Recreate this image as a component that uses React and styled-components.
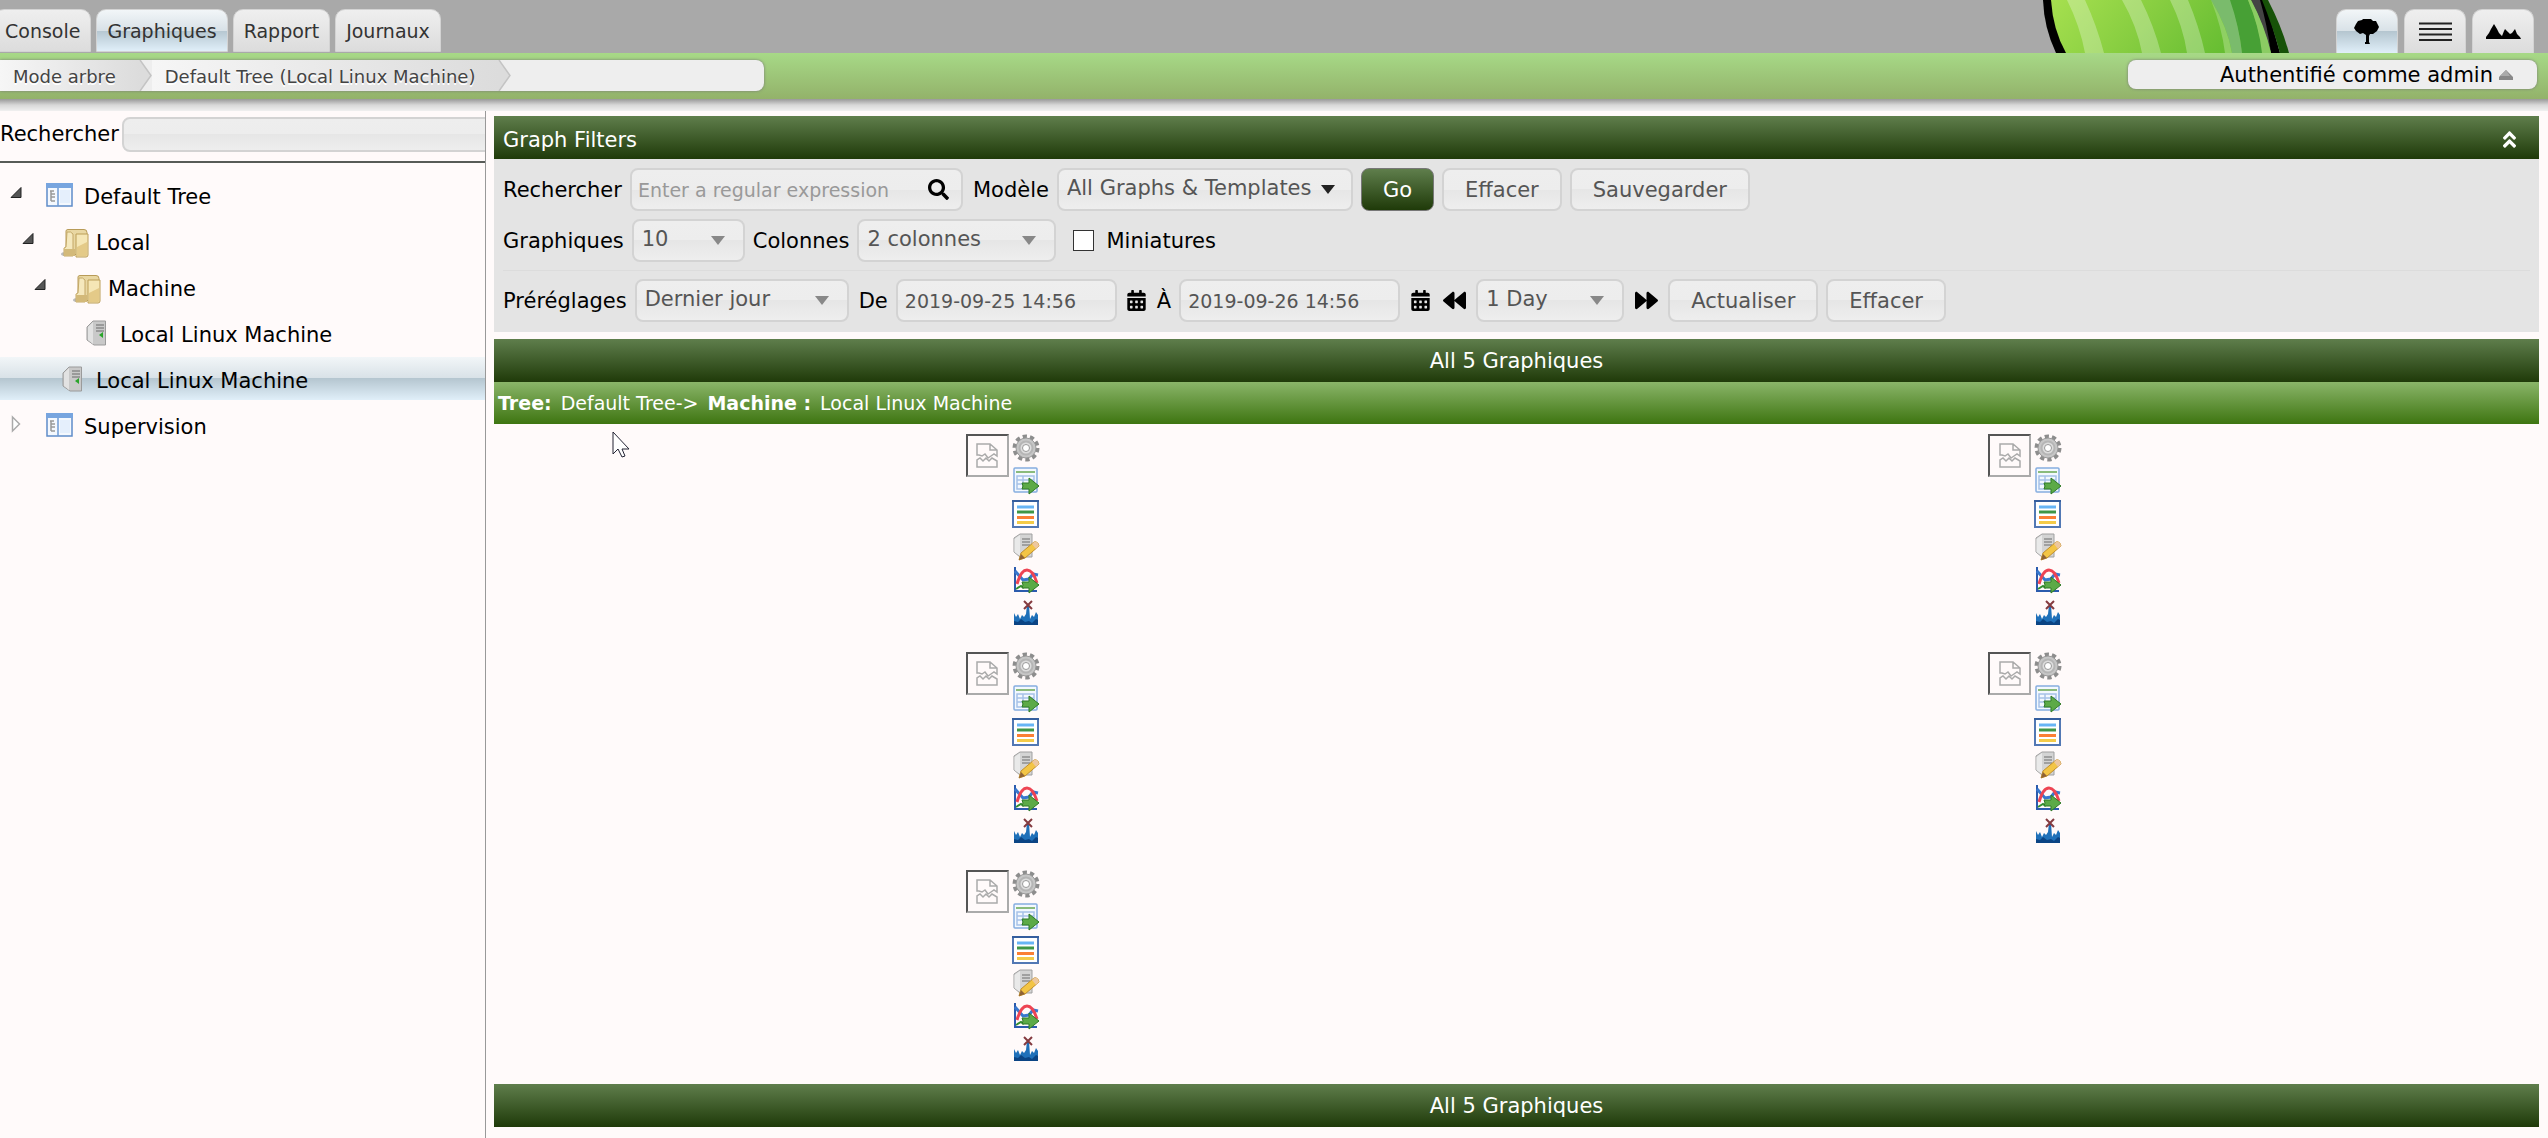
import { FaSearch, FaCalendarAlt, FaBackward, FaForward, FaAngleDoubleUp } from "react-icons/fa";
import styled, { createGlobalStyle, css } from "styled-components";

const GlobalStyle = createGlobalStyle`
  * {
    box-sizing: border-box;
  }
  body {
    margin: 0;
    background: #fffafa;
    color: #000;
    font-family: "DejaVu Sans", Verdana, sans-serif;
    font-size: 21px;
    line-height: 24px;
  }
  a {
    color: inherit;
    text-decoration: none;
  }
  button, input, select {
    font-family: inherit;
    font-size: 21px;
    color: #555;
  }
`;

const tabs = ["Console", "Graphiques", "Rapport", "Journaux"];

const treeItems = [
  { label: "Default Tree", level: 0, icon: "tree", state: "open" },
  { label: "Local", level: 1, icon: "folder", state: "open" },
  { label: "Machine", level: 2, icon: "folder", state: "open" },
  { label: "Local Linux Machine", level: 3, icon: "server" },
  { label: "Local Linux Machine", level: 1, icon: "server", selected: true },
  { label: "Supervision", level: 0, icon: "tree", state: "closed" },
];

const graphs = [1, 2, 3, 4, 5];

const Logo = () => (
  <LogoSvg viewBox="0 0 280 53" aria-hidden="true">
    <defs>
      <linearGradient id="logoFill" x1="0" x2="1" y1="0" y2="0.2">
        <stop offset="0" stopColor="#a6e04f" />
        <stop offset="0.5" stopColor="#86cd40" />
        <stop offset="1" stopColor="#62bb30" />
      </linearGradient>
    </defs>
    <path d="M14 0H236L251 53H27Q15 28 14 0Z" fill="#000" />
    <path d="M233 0H239Q253 27 260 53H251Q244 27 233 0Z" fill="#175208" />
    <path d="M222 0H231Q238 24 242 53H238Q232 24 222 0Z" fill="#444" />
    <path d="M22 0H222Q234 24 242 53H37Q24 30 22 0Z" fill="url(#logoFill)" />
    <path d="M200 0H219Q230 26 234 53H213Q210 26 200 0Z" fill="#47a035" />
    <path d="M182 0H201Q210 26 213 53H203Q199 28 182 0Z" fill="#7abb6c" />
    <path d="M182 0Q199 28 203 53H196Q193 28 182 0Z" fill="#8fd063" />
    <path d="M222 0Q236 26 242 53H233Q230 26 219 0Z" fill="#8bcc63" />
    <g fill="#fff" opacity="0.28">
      <path d="M38 0H56Q68 26 75 53H56Q51 26 38 0Z" />
      <path d="M93 0H112Q125 26 132 53H113Q108 26 93 0Z" />
      <path d="M141 0H159Q170 26 176 53H158Q154 26 141 0Z" />
    </g>
  </LogoSvg>
);

const TreeViewIcon = () => (
  <svg width="26" height="28" viewBox="0 0 26 28">
    <path d="M9 1h8l2 2h3l2 4 1 2-2 4-4 3h-3l-1 2v6l1 2h-5v-2h1v-7l-3-2-3 1-4-3-2-3 2-4 2-3 4-1z" />
  </svg>
);

const ListViewIcon = () => (
  <svg width="33" height="20" viewBox="0 0 33 20">
    <path d="M0 1.500h33M0 7h33M0 12.500h33M0 18h33" stroke="#222" strokeWidth="2" />
  </svg>
);

const PreviewIcon = () => (
  <svg width="35" height="15" viewBox="0 0 35 15">
    <path d="M0 15v-2l3-4 2-4 3-5 3 5 2 4 3 3 2-5 1-2 3 3 2 2 2-1 3-4 2 5 3 3 1 2z" />
  </svg>
);

const Expander = ({ open }) => (
  <svg width="12" height="18" viewBox="0 0 12 18">
    {open ? (
      <path d="M11 2.500V12.500H1Z" fill="#555" stroke="#222" />
    ) : (
      <path d="M2.500 2V16L9.500 9Z" fill="#fff" stroke="#aaa" strokeWidth="1.500" />
    )}
  </svg>
);

const TreeIcon = () => (
  <svg width="27" height="24" viewBox="0 0 27 24">
    <rect x="1" y="1" width="25" height="22" fill="#f4f8fe" stroke="#5f8cc9" strokeWidth="1.500" />
    <path d="M0 0h27v5H0z" fill="#78a5df" />
    <path d="M12 5v18" stroke="#6f9bd4" strokeWidth="1.500" />
    <rect x="14" y="7" width="10" height="13" fill="#e5effc" />
    <path d="M4 8h4M5 8v10M5 11h4M5 14h4M5 18h4" stroke="#999" strokeWidth="1.500" fill="none" />
  </svg>
);

const FolderIcon = () => (
  <svg width="28" height="29" viewBox="0 0 28 29">
    <ellipse cx="5" cy="25" rx="5" ry="2" fill="#bbb" />
    <path d="M5 2q0-1.500 2-1.500h16q3 0 3 3v22H5z" fill="#e9d7a2" stroke="#b89b58" />
    <path d="M6 3q4-1 6 2v22H3V19l2-1z" fill="#f5e8bd" stroke="#c4a867" />
    <path d="M3 20h11v7H3z" fill="#d3b979" />
    <path d="M15 5h12v21q0 2-2 2H15z" fill="#f5e6b5" stroke="#bc9e58" />
    <path d="M16 18l10-5v13q0 1-1 1h-9z" fill="#e4ca88" />
  </svg>
);

const ServerIcon = () => (
  <svg width="21" height="26" viewBox="0 0 21 26">
    <path d="M1 7l6-6h12.500v24H8l-7-5z" fill="#c9c9c9" stroke="#9b9b9b" />
    <path d="M2 7l5-5v22l-5-4z" fill="#e2e2e2" />
    <path d="M10 5h8M10 8h8M10 11h8" stroke="#8a8a8a" strokeWidth="1.500" />
    <path d="M13 15l4-3v6z" fill="#2ba52b" />
  </svg>
);

const treeIcons = { tree: TreeIcon, folder: FolderIcon, server: ServerIcon };

const BrokenImage = () => (
  <BrokenFrame role="img" aria-label="Graphique">
    <svg width="22" height="25" viewBox="0 0 22 25" fill="none" stroke="#aaa" strokeWidth="1.500">
      <path d="M1 12V1h13l7 6v6l-3-2-3 2-3 2-3-4-3 2-3-1zM14 1v6h7" />
      <path d="M1 24v-7l3-2 3 3 3-3 3 3 3-3 5 3v6z" />
    </svg>
  </BrokenFrame>
);

const GearIcon = () => (
  <svg width="28" height="28" viewBox="0 0 28 28">
    <circle cx="14" cy="14" r="11.500" fill="none" stroke="#8d8d8d" strokeWidth="4" strokeDasharray="4.200 3.025" />
    <circle cx="14" cy="14" r="10" fill="#c6c6c6" stroke="#999" />
    <circle cx="14" cy="14" r="6.500" fill="#ddd" stroke="#b5b5b5" strokeWidth="2" />
    <circle cx="14" cy="14" r="3.500" fill="#fff" stroke="#999" />
  </svg>
);

const GreenArrow = () => (
  <path d="M10 16h7v-5l10 8-10 8v-5h-7l1-3z" fill="#5caa47" stroke="#2f7a26" />
);

const CsvIcon = () => (
  <svg width="28" height="28" viewBox="0 0 28 28">
    <rect x="2" y="1" width="23" height="24" rx="1" fill="#f3f8fe" stroke="#86ade0" strokeWidth="1.500" />
    <path d="M4 5h19" stroke="#8abb7c" strokeWidth="2" />
    <path d="M5 9h17v13H5zM5 13h17M5 17h17M11 9v13" fill="none" stroke="#a6c1e8" strokeWidth="1.500" />
    <GreenArrow />
  </svg>
);

const ViewIcon = () => (
  <svg width="28" height="28" viewBox="0 0 28 28">
    <rect x="1" y="1" width="25" height="26" fill="#fff" stroke="#5278b4" strokeWidth="2" />
    <path d="M0 1h27" stroke="#355e9e" strokeWidth="2" />
    <path d="M5 7h17" stroke="#67b5f5" strokeWidth="3" />
    <path d="M5 12h17" stroke="#3f9646" strokeWidth="3" />
    <path d="M5 17.500h17" stroke="#fb8035" strokeWidth="3" />
    <path d="M5 22.500h17" stroke="#f4cb49" strokeWidth="3" />
  </svg>
);

const EditIcon = () => (
  <svg width="28" height="28" viewBox="0 0 28 28">
    <path d="M2 5l6-4h12v23H8l-6-5z" fill="#d4d4d4" stroke="#a0a0a0" />
    <path d="M2.500 6L8 2v21l-5.500-4z" fill="#e9e9e9" />
    <path d="M10 6h8M10 9h8M10 12h8" stroke="#8e8e8e" strokeWidth="1.500" />
    <path d="M7 27l2-7L22 9q4-1 5 4L13 25z" fill="#f3c545" stroke="#c18f2c" />
    <path d="M22 9q4-1 5 4l-3 3-4-5z" fill="#edc79e" />
    <path d="M7 27l2-6 4 4z" fill="#8f6235" />
  </svg>
);

const ChartIcon = () => (
  <svg width="28" height="28" viewBox="0 0 28 28" fill="none">
    <path d="M3 1v24h22" stroke="#2b5bad" strokeWidth="2" />
    <path d="M3 5l8 9 6-1 4-5 5 1" stroke="#3978ce" strokeWidth="3" />
    <path d="M5 18Q9 4 15 4T25 17" stroke="#ee4453" strokeWidth="3" />
    <path d="M4 23l5-3 3 2" stroke="#338f2f" strokeWidth="2" />
    <GreenArrow />
  </svg>
);

const SpikeIcon = () => (
  <svg width="28" height="28" viewBox="0 0 28 28">
    <path d="M2 26V14l2 4 2-3 2 5 2-4 2 2 2-3 1-9h2l1 14 2-4 2 2 2-5 2 3v10z" fill="#1f70b9" />
    <path d="M2 26v-4l4 1 3-3 4 3 4-1 3 2 4-4 2 1v5z" fill="#0b4484" />
    <path d="M12 2l8 8M20 2l-8 8" stroke="#843a3f" strokeWidth="2" />
  </svg>
);

const graphActions = [
  ["Paramètres", GearIcon],
  ["Export CSV", CsvIcon],
  ["Vue", ViewIcon],
  ["Éditer", EditIcon],
  ["Temps réel", ChartIcon],
  ["Supprimer les pics", SpikeIcon],
];

const Caret = ({ dark }) => (
  <svg width="14" height="9" viewBox="0 0 14 9">
    <path d="M0 0h14L7 9z" fill={dark ? "#222" : "#888"} />
  </svg>
);

const Dropdown = ({ id, value, width, dark }) => (
  <SelectBox $width={width} $dark={dark}>
    <select id={id} defaultValue={value}>
      <option>{value}</option>
    </select>
    <Caret dark={dark} />
  </SelectBox>
);

const CrumbEnd = () => (
  <CrumbArrow width="36" height="31" viewBox="0 0 36 31">
    <path d="M24 0l11 15.500L24 31z" fill="#dcdcdc" />
    <path d="M24 0l11 15.500L24 31" fill="none" stroke="#c4c4c4" strokeWidth="1.500" />
  </CrumbArrow>
);

const App = () => {
  return (
    <>
      <GlobalStyle />
      <Header>
        <Tabs>
          {tabs.map((tab) => (
            <Tab href="#" key={tab} $active={tab === "Graphiques"}>
              {tab}
            </Tab>
          ))}
        </Tabs>
        <HeaderRight>
          <Logo />
          <ViewTabs>
            <ViewTab href="#" aria-label="Mode arbre" $active>
              <TreeViewIcon />
            </ViewTab>
            <ViewTab href="#" aria-label="Mode liste">
              <ListViewIcon />
            </ViewTab>
            <ViewTab href="#" aria-label="Mode aperçu">
              <PreviewIcon />
            </ViewTab>
          </ViewTabs>
        </HeaderRight>
      </Header>
      <CrumbBar>
        <Crumbs>
          <Crumb href="#">
            <span>Mode arbre</span>
            <CrumbEnd />
          </Crumb>
          <Crumb href="#">
            <span>Default Tree (Local Linux Machine)</span>
            <CrumbEnd />
          </Crumb>
        </Crumbs>
        <UserButton>
          Authentifié comme admin
          <svg width="14" height="10" viewBox="0 0 14 10">
            <path d="M7 0l7 7v3H0V7z" fill="#888" />
            <path d="M7 0l4 6H1z" fill="#aaa" />
          </svg>
        </UserButton>
      </CrumbBar>
      <BarShadow />
      <Content>
        <Sidebar>
          <TreeSearch>
            <label htmlFor="tree-search">Rechercher</label>
            <input id="tree-search" type="text" />
          </TreeSearch>
          <Tree>
            {treeItems.map((item, i) => {
              const Icon = treeIcons[item.icon];
              return (
                <TreeRow key={i} $level={item.level} $selected={item.selected}>
                  <ExpandCell>{item.state && <Expander open={item.state === "open"} />}</ExpandCell>
                  <TreeLink href="#">
                    <IconCell $icon={item.icon}>
                      <Icon />
                    </IconCell>
                    {item.label}
                  </TreeLink>
                </TreeRow>
              );
            })}
          </Tree>
        </Sidebar>
        <Main>
          <DarkBar>
            Graph Filters
            <CollapseButton aria-label="Réduire">
              <FaAngleDoubleUp />
            </CollapseButton>
          </DarkBar>
          <Filters>
            <FilterRow>
              <label htmlFor="search">Rechercher</label>
              <SearchBox>
                <input id="search" type="text" placeholder="Enter a regular expression" />
                <FaSearch />
              </SearchBox>
              <Label htmlFor="template">Modèle</Label>
              <Dropdown id="template" value="All Graphs & Templates" width={296} dark />
              <Button type="button" $primary>
                Go
              </Button>
              <Button type="button">Effacer</Button>
              <Button type="button">Sauvegarder</Button>
            </FilterRow>
            <FilterRow>
              <label htmlFor="graphs">Graphiques</label>
              <Dropdown id="graphs" value="10" width={113} />
              <label htmlFor="columns">Colonnes</label>
              <Dropdown id="columns" value="2 colonnes" width={199} />
              <CheckLabel>
                <input type="checkbox" />
                Miniatures
              </CheckLabel>
            </FilterRow>
            <Divider />
            <FilterRow>
              <label htmlFor="presets">Préréglages</label>
              <Dropdown id="presets" value="Dernier jour" width={214} />
              <Label htmlFor="from">De</Label>
              <DateInput id="from" type="text" defaultValue="2019-09-25 14:56" />
              <IconButton type="button" aria-label="Date de début">
                <FaCalendarAlt />
              </IconButton>
              <label htmlFor="to">À</label>
              <DateInput id="to" type="text" defaultValue="2019-09-26 14:56" />
              <IconButton type="button" aria-label="Date de fin">
                <FaCalendarAlt />
              </IconButton>
              <IconButton type="button" aria-label="Reculer" $wide>
                <FaBackward />
              </IconButton>
              <Dropdown id="span" value="1 Day" width={148} />
              <IconButton type="button" aria-label="Avancer" $wide>
                <FaForward />
              </IconButton>
              <Button type="button">Actualiser</Button>
              <Button type="button">Effacer</Button>
            </FilterRow>
          </Filters>
          <DarkBar $center>All 5 Graphiques</DarkBar>
          <TreeTitle>
            <b>Tree:</b>
            <span>Default Tree-&gt;</span>
            <b>Machine :</b>
            <span>Local Linux Machine</span>
          </TreeTitle>
          <Graphs>
            {graphs.map((id) => (
              <Graph key={id}>
                <BrokenImage />
                <Actions>
                  {graphActions.map(([label, Icon]) => (
                    <a href="#" key={label} aria-label={label}>
                      <Icon />
                    </a>
                  ))}
                </Actions>
              </Graph>
            ))}
          </Graphs>
          <DarkBar $center>All 5 Graphiques</DarkBar>
          <Pointer width="18" height="27" viewBox="0 0 18 27">
            <path d="M1 1v22l5-5 4 8 3-1-3-7h7z" fill="#fff" stroke="#223" />
          </Pointer>
        </Main>
      </Content>
    </>
  );
};

const activeFill = css`
  background: linear-gradient(#f2f6f8 0%, #d8e1e7 50%, #b5c6d0 50%, #e0eff9 100%);
`;

const controlFill = css`
  border: 2px solid #d3d3d3;
  border-radius: 8px;
  background: linear-gradient(#eee 0%, #ededed 50%, #e6e6e6 50%, #eee 100%);
`;

const Header = styled.header`
  display: flex;
  justify-content: space-between;
  align-items: flex-end;
  height: 53px;
  background: #a9a9a9;
  overflow: hidden;
`;

const Tabs = styled.nav`
  display: flex;
  gap: 5px;
  margin-left: -6px;
  padding-bottom: 1px;
`;

const Tab = styled.a`
  height: 43px;
  padding: 10px 10px 0;
  border: 1px solid #d3d3d3;
  border-radius: 10px 10px 0 0;
  background: linear-gradient(#efefef, #dcdcdc);
  color: #333;
  font-size: 19px;
  line-height: 22px;
  ${({ $active }) => $active && activeFill}
`;

const HeaderRight = styled.div`
  display: flex;
  align-items: flex-end;
  gap: 27px;
  padding-right: 14px;
`;

const LogoSvg = styled.svg`
  width: 280px;
  height: 53px;
`;

const ViewTabs = styled.nav`
  display: flex;
  gap: 6px;
`;

const ViewTab = styled.a`
  display: flex;
  align-items: center;
  justify-content: center;
  width: 62px;
  height: 44px;
  border: 1px solid #d3d3d3;
  border-bottom: 0;
  border-radius: 10px 10px 0 0;
  background: linear-gradient(#efefef, #dcdcdc);
  ${({ $active }) => $active && activeFill}
`;

const CrumbBar = styled.div`
  display: flex;
  justify-content: space-between;
  align-items: flex-start;
  height: 46px;
  padding: 7px 11px 0 0;
  background: linear-gradient(#a7d987, #93b26a);
`;

const Crumbs = styled.nav`
  display: flex;
  width: 30vw;
  height: 31px;
  border-radius: 0 8px 8px 0;
  background: #eee;
  box-shadow: 0 0 3px #777;
`;

const Crumb = styled.a`
  display: flex;
  align-items: center;
  height: 31px;
  padding-left: 13px;
  background: linear-gradient(90deg, #f6f6f6, #dcdcdc) no-repeat;
  background-size: calc(100% - 12px) 100%;
  color: #444;
  font-size: 18px;
  text-shadow: 0 2px 0 #fff;

  span {
    padding-top: 2px;
  }
`;

const CrumbArrow = styled.svg`
  flex: none;
`;

const UserButton = styled.button`
  display: flex;
  align-items: center;
  justify-content: flex-end;
  gap: 6px;
  width: 409px;
  height: 29px;
  padding: 1px 24px 0 0;
  border: 0;
  border-radius: 8px;
  background: #eee;
  box-shadow: 0 0 3px #777;
  color: #000;
`;

const BarShadow = styled.div`
  height: 12px;
  background: linear-gradient(#999, #d8d8d8 50%, #f0f0f0);
`;

const Content = styled.div`
  display: flex;
  align-items: stretch;
  min-height: calc(100vh - 111px);
`;

const Sidebar = styled.aside`
  width: 486px;
  flex: none;
  border-right: 1px solid #999;
  overflow: hidden;
`;

const TreeSearch = styled.form`
  display: flex;
  align-items: center;
  gap: 3px;
  height: 52px;
  padding-bottom: 4px;
  border-bottom: 2px solid #575b57;

  input {
    flex: 1;
    height: 35px;
    margin-right: -8px;
    ${controlFill}
  }
`;

const Tree = styled.ul`
  display: flex;
  flex-direction: column;
  gap: 3px;
  margin: 0;
  padding: 10px 0;
  list-style: none;
`;

const TreeRow = styled.li`
  display: flex;
  align-items: center;
  height: 43px;
  padding-left: ${({ $level }) => 10 + $level * 12}px;
  ${({ $selected }) => $selected && activeFill}
`;

const ExpandCell = styled.span`
  display: flex;
  width: 36px;
  padding-bottom: 2px;
`;

const TreeLink = styled.a`
  display: flex;
  align-items: center;
  padding-top: 5px;
`;

const IconCell = styled.span`
  display: flex;
  width: 38px;
  padding-left: ${({ $icon }) => ({ tree: 0, folder: 3, server: 4 })[$icon]}px;
  padding-bottom: ${({ $icon }) => ($icon === "folder" ? 0 : 5)}px;
`;

const Main = styled.main`
  position: relative;
  flex: 1;
  padding: 5px 9px 11px 8px;
`;

const DarkBar = styled.div`
  display: flex;
  align-items: center;
  justify-content: ${({ $center }) => ($center ? "center" : "space-between")};
  height: 43px;
  padding: ${({ $center }) => ($center ? "0" : "4px 19px 0 9px")};
  background: linear-gradient(#5f7e4c, #1f3a09);
  color: #fff;
`;

const CollapseButton = styled.button`
  display: flex;
  padding: 0;
  border: 0;
  background: none;
  color: #fff;
`;

const Filters = styled.form`
  display: flex;
  flex-direction: column;
  gap: 8px;
  margin-bottom: 7px;
  padding: 9px 9px 10px;
  background: #e4e4e4;
`;

const FilterRow = styled.div`
  display: flex;
  align-items: center;
  gap: 8px;
`;

const Label = styled.label`
  margin-left: 2px;
`;

const SearchBox = styled.div`
  display: flex;
  align-items: center;
  width: 333px;
  height: 43px;
  padding: 0 12px 0 6px;
  ${controlFill}

  input {
    flex: 1;
    min-width: 0;
    padding: 0;
    border: 0;
    background: none;
    font-size: 19px;
  }
  input::placeholder {
    color: #999;
  }
  svg {
    color: #000;
  }
`;

const SelectBox = styled.div`
  display: grid;
  align-items: center;
  width: ${({ $width }) => $width}px;
  height: 43px;
  ${controlFill}

  select,
  svg {
    grid-area: 1 / 1;
  }
  select {
    appearance: none;
    width: 100%;
    height: 39px;
    padding: 0 8px 4px;
    border: 0;
    background: none;
  }
  svg {
    justify-self: end;
    margin-right: ${({ $dark }) => ($dark ? 16 : 18)}px;
    pointer-events: none;
  }
`;

const Button = styled.button`
  height: 43px;
  padding: 0 21px;
  ${controlFill}
  ${({ $primary }) =>
    $primary &&
    css`
      border: 1px solid #777;
      background: linear-gradient(#5f7e4c, #1f3a09);
      color: #fff;
    `}
`;

const CheckLabel = styled.label`
  display: flex;
  align-items: center;
  gap: 12px;
  margin-left: 9px;

  input {
    appearance: none;
    width: 21px;
    height: 21px;
    margin: 0;
    border: 1px solid #333;
    background: #fff;
  }
`;

const Divider = styled.hr`
  width: 100%;
  height: 1px;
  margin: 0;
  border: 0;
  background: #dcdcdc;
`;

const DateInput = styled.input`
  width: 221px;
  height: 43px;
  padding: 0 7px;
  font-size: 19px;
  ${controlFill}
`;

const IconButton = styled.button`
  display: flex;
  justify-content: center;
  padding: 0;
  width: ${({ $wide }) => ($wide ? 28 : 24)}px;
  border: 0;
  background: none;
  color: #000;
  font-size: ${({ $wide }) => ($wide ? 23 : 21)}px;
`;

const TreeTitle = styled.div`
  display: flex;
  gap: 9px;
  height: 42px;
  padding: 10px 4px 0;
  background: linear-gradient(#8ab569, #3e7511);
  color: #fff;
  font-size: 19px;
  line-height: 22px;
`;

const Graphs = styled.div`
  display: grid;
  grid-template-columns: 1fr 1fr;
  row-gap: 25px;
  padding: 10px 0 21px;
`;

const Graph = styled.div`
  display: flex;
  justify-content: center;
  align-items: flex-start;
  gap: 3px;
  padding-right: 5px;
`;

const BrokenFrame = styled.div`
  display: flex;
  align-items: center;
  justify-content: center;
  width: 43px;
  height: 43px;
  border: 2px solid;
  border-color: #555 #aaa #aaa #555;
`;

const Actions = styled.div`
  display: flex;
  flex-direction: column;
  gap: 5px;

  a {
    display: flex;
  }
`;

const Pointer = styled.svg`
  position: absolute;
  left: 126px;
  top: 320px;
`;

export default App;
